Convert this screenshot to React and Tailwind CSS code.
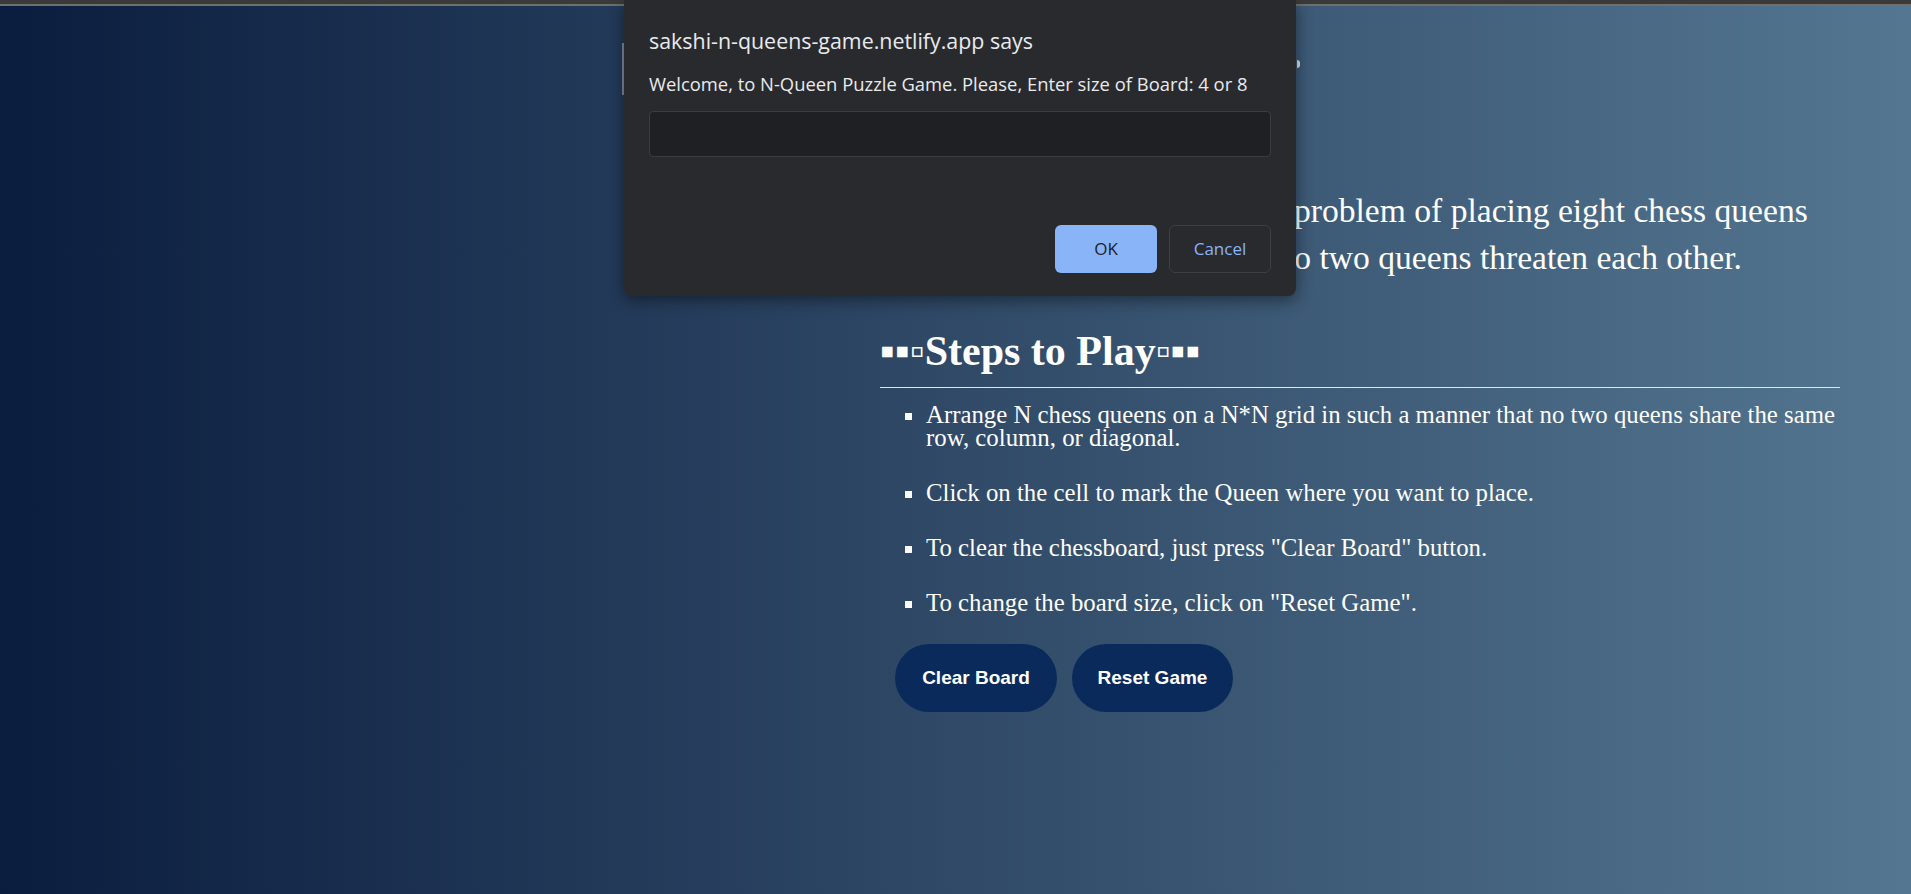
export default function App() {
  const steps = [
    'Arrange N chess queens on a N*N grid in such a manner that no two queens share the same row, column, or diagonal.',
    'Click on the cell to mark the Queen where you want to place.',
    'To clear the chessboard, just press "Clear Board" button.',
    'To change the board size, click on "Reset Game".',
  ];

  return (
    <div className="relative min-h-screen w-full overflow-hidden bg-[linear-gradient(to_right,#0b1d3e,#547690)] font-['Liberation_Serif',serif] text-white">
      {/* browser chrome edge */}
      <div className="h-[4px] bg-[#3a3a3a]" />
      <div className="h-[2px] bg-[#6f6f6f]" />

      {/* page title, sits under the prompt */}
      <div className="ml-[622px] mt-[37px] flex h-[52px] w-[678px] justify-between">
        <div className="h-full w-[2px] bg-[#7f8a9c]" />
        <div className="mt-[17px] h-[8px] w-[3px] rounded-r-full bg-white/80" />
      </div>

      <div className="mt-[92px] flex">
        <div className="w-[880px] shrink-0" />

        <div className="w-[960px]">
          <p className="text-[33.6px] leading-[47px]">
            The eight queens puzzle is the problem of placing eight chess queens on an 8×8 chessboard so that no two queens threaten each other.
          </p>

          <h2 className="mt-[45px] text-[42px] font-bold leading-[50px]">▪▪▫Steps to Play▫▪▪</h2>
          <hr className="mt-[11px] border-[#dfe5ec]" />

          <ul className="mt-[15px] list-[square] space-y-[32px] pl-[46px] text-[24.8px] leading-[23px]">
            {steps.map((s) => (
              <li key={s}>{s}</li>
            ))}
          </ul>

          <div className="mt-[30px] flex gap-[15px] pl-[15px] font-['Liberation_Sans',Arial,sans-serif]">
            <button className="h-[68px] w-[162px] rounded-full bg-[#0a2a5b] text-[19px] font-bold text-white">
              Clear Board
            </button>
            <button className="h-[68px] w-[161px] rounded-full bg-[#0a2a5b] text-[19px] font-bold text-white">
              Reset Game
            </button>
          </div>
        </div>
      </div>

      {/* window.prompt */}
      <div className="absolute left-[624px] top-0 h-[296px] w-[672px] rounded-b-[8px] bg-[#292a2d] px-[25px] font-['Open_Sans',sans-serif] text-[#e8eaed] shadow-[0_4px_16px_rgba(0,0,0,0.45)]">
        <div className="pt-[27px] text-[21.4px] leading-[28px]">sakshi-n-queens-game.netlify.app says</div>
        <div className="mt-[17px] text-[18.4px] leading-[24px]">
          Welcome, to N-Queen Puzzle Game. Please, Enter size of Board: 4 or 8
        </div>
        <div className="mt-[15px] h-[46px] rounded-[4px] border border-[#3c3d41] bg-[#1f2023]" />
        <div className="mt-[68px] flex justify-end gap-[12px]">
          <button className="h-[48px] w-[102px] rounded-[6px] bg-[#8ab4f8] text-[17px] text-[#202124]">OK</button>
          <button className="h-[48px] w-[102px] rounded-[6px] border border-[#3c4043] text-[17px] text-[#8ab4f8]">
            Cancel
          </button>
        </div>
      </div>
    </div>
  );
}
